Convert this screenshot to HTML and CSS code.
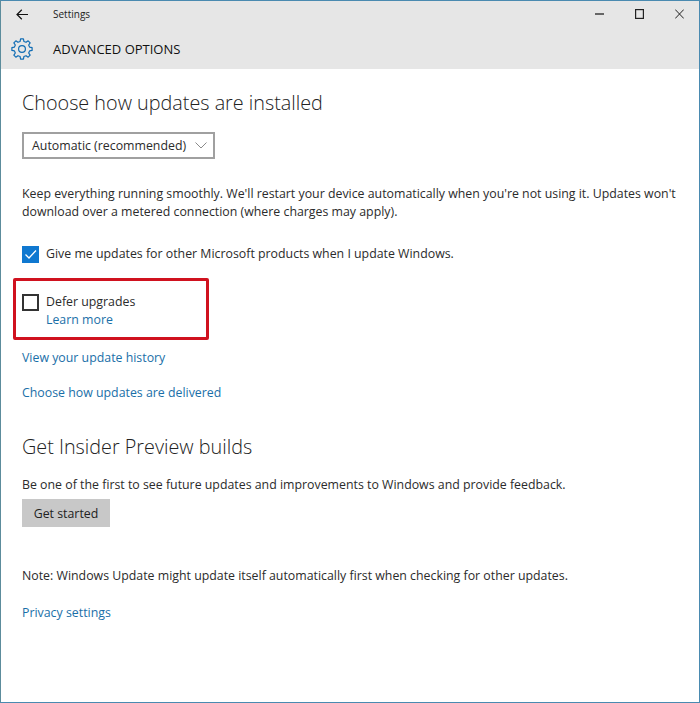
FILE: index.html
```html
<!DOCTYPE html>
<html lang="en">
<head>
<meta charset="utf-8">
<title>Settings</title>
<link rel="stylesheet" href="styles.css">
</head>
<body>
<div class="window">
  <header class="head">
    <div class="titlebar">
      <svg class="back" width="12" height="11" viewBox="0 0 12 11"><path d="M5.800.8 1 5.500l4.800 4.700M1 5.500h11" fill="none" stroke="#111" stroke-width="1.2"/></svg>
      <span class="apptitle">Settings</span>
      <div class="controls">
        <svg width="9" height="10" viewBox="0 0 9 10"><path d="M0 5h9" stroke="#111" stroke-width="1.2"/></svg>
        <svg width="9" height="10" viewBox="0 0 9 10"><rect x=".6" y=".6" width="7.800" height="8.800" fill="none" stroke="#222" stroke-width="1.2"/></svg>
        <svg width="9" height="10" viewBox="0 0 9 10"><path d="M.2.500l8.600 9M8.800.500l-8.600 9" stroke="#222" stroke-width="1"/></svg>
      </div>
    </div>
    <div class="pagebar">
      <svg class="gear" width="22" height="22" viewBox="0 0 22 22"><polygon points="9.11,3.43 9.58,.9 12.42,.9 12.89,3.43 15.02,4.31 17.14,2.85 19.15,4.86 17.69,6.98 18.57,9.11 21.1,9.58 21.1,12.42 18.57,12.89 17.69,15.02 19.15,17.14 17.14,19.15 15.02,17.69 12.89,18.57 12.42,21.1 9.58,21.1 9.11,18.57 6.98,17.69 4.86,19.15 2.85,17.14 4.31,15.02 3.43,12.89 .9,12.42 .9,9.58 3.43,9.11 4.31,6.98 2.85,4.86 4.86,2.85 6.98,4.31" fill="none" stroke="#0f6cb4" stroke-width="1.200" stroke-linejoin="round"/><circle cx="11" cy="11" r="3.400" fill="none" stroke="#0f6cb4" stroke-width="1.200"/></svg>
      <span class="pagetitle">ADVANCED OPTIONS</span>
    </div>
  </header>
  <main class="content">
    <h2 class="heading first">Choose how updates are installed</h2>
    <div class="select">
      <span>Automatic (recommended)</span>
      <svg width="12" height="7" viewBox="0 0 12 7"><path d="M.5.500l5.500 5.500 5.500-5.500" fill="none" stroke="#8a8a8a"/></svg>
    </div>
    <p class="para">Keep everything running smoothly. We'll restart your device automatically when you're not using it. Updates won't download over a metered connection (where charges may apply).</p>
    <div class="check-row checked-row">
      <span class="box checked"><svg width="17" height="17" viewBox="0 0 17 17"><path d="M3.500 8.500l3.500 3.500 7-7.500" fill="none" stroke="#fff" stroke-width="1.300"/></svg></span>
      <span>Give me updates for other Microsoft products when I update Windows.</span>
    </div>
    <div class="highlight">
      <div class="check-row">
        <span class="box"></span>
        <div class="defer">
          <div>Defer upgrades</div>
          <a class="link" href="#">Learn more</a>
        </div>
      </div>
    </div>
    <a class="link block history" href="#">View your update history</a>
    <a class="link block delivered" href="#">Choose how updates are delivered</a>
    <h2 class="heading insider">Get Insider Preview builds</h2>
    <p class="para intro">Be one of the first to see future updates and improvements to Windows and provide feedback.</p>
    <button class="btn" type="button">Get started</button>
    <p class="para note">Note: Windows Update might update itself automatically first when checking for other updates.</p>
    <a class="link block privacy" href="#">Privacy settings</a>
  </main>
</div>
</body>
</html>
```
FILE: styles.css
```css
* { box-sizing: border-box; }
html, body { margin: 0; height: 100%; }
body {
  font-family: "Open Sans", "Noto Sans", sans-serif;
  font-size: 12.35px;
  line-height: 18px;
  color: #2b2b2b;
  background: #fff;
}
.window {
  height: 703px;
  border: 1px solid #4a8ab0;
  border-left-color: #5c8c9c;
  overflow: hidden;
}
.head { background: #e6e6e6; height: 68px; }
.titlebar { display: flex; align-items: center; height: 26px; padding-left: 15px; }
.back { margin-right: 25px; }
.apptitle { font-size: 10px; color: #222; }
.controls { margin-left: auto; display: flex; gap: 31px; padding-right: 15px; }
.pagebar { display: flex; align-items: center; height: 42px; padding: 2px 0 0 10px; }
.gear { margin-right: 20px; }
.pagetitle { font-size: 13px; color: #111; }
.content { padding-left: 21px; }
.heading {
  margin: 0;
  font-weight: 300;
  font-size: 19.8px;
  line-height: 26px;
  color: #222;
}
.first { margin-top: 21px; }
.select {
  display: flex;
  align-items: center;
  justify-content: space-between;
  width: 193px;
  height: 27px;
  margin-top: 16px;
  padding: 0 6px 0 8px;
  border: 2px solid #a0a0a0;
}
.para { margin: 0; width: 664px; }
.select + .para { margin-top: 26px; }
.check-row { display: flex; gap: 7px; }
.checked-row { margin-top: 24px; align-items: center; }
.box {
  flex: none;
  width: 17px;
  height: 17px;
  border: 2px solid #333;
}
.box.checked { border: 0; background: #0f78d0; }
.box svg { display: block; }
.highlight {
  width: 196px;
  height: 62px;
  margin: 15px 0 0 -9px;
  padding: 12px 0 0 6px;
  border: 3px solid #d0121f;
  border-radius: 2px;
}
.highlight .box { margin-top: 1px; }
.link { color: #1a6fa8; text-decoration: none; }
.block { display: block; }
.history { margin-top: 9px; }
.delivered { margin-top: 17px; }
.insider { margin-top: 32px; }
.intro { margin-top: 16px; }
.btn {
  display: block;
  width: 88px;
  height: 28px;
  margin-top: 5px;
  padding: 1px 0 0;
  border: 0;
  background: #c8c8c8;
  color: #222;
  font: inherit;
}
.note { margin-top: 40px; }
.privacy { margin-top: 19px; }
```
